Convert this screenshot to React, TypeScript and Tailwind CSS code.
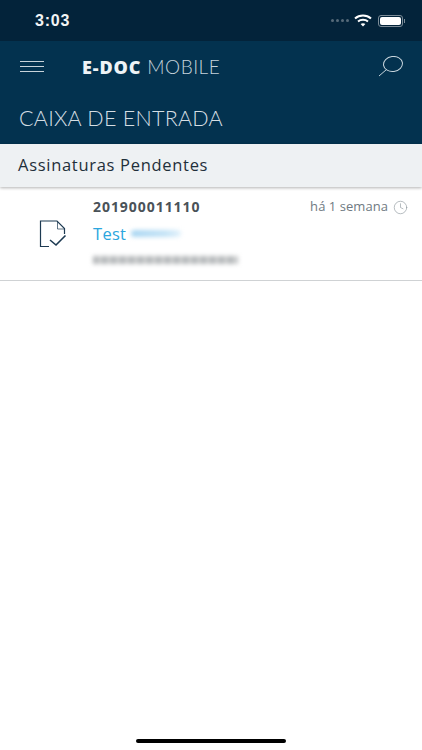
import { Clock } from 'lucide-react'

function Wifi() {
  return (
    <svg width="18" height="13" viewBox="0 0 18 13" fill="none" stroke="white" strokeWidth="2">
      <path d="M1 4.5C5.5 0.5 12.5 0.5 17 4.5" />
      <path d="M4 7.5C6.8 5.2 11.2 5.2 14 7.5" />
      <path d="M9 12.5L6.6 10C8 8.9 10 8.9 11.4 10Z" fill="white" stroke="none" />
    </svg>
  )
}

function DocCheck() {
  return (
    <svg width="28" height="29" viewBox="0 0 28 29" fill="none" stroke="#1d3a52">
      <path d="M10 26.5H1.5V1H18L25.5 8.5V14" strokeWidth="1.2" />
      <path d="M18.5 1.5V9H25.5" strokeWidth="0.7" />
      <path d="M11 20L17 25L26.5 15.5" strokeWidth="1.6" />
    </svg>
  )
}

export default function App() {
  return (
    <div className="relative h-[750px] w-[422px] overflow-hidden bg-white font-['Open_Sans',sans-serif]">
      {/* Status bar */}
      <div className="flex h-[41px] items-center justify-between bg-[#03233a] pl-[35px] pr-[17px]">
        <span className="font-['Liberation_Sans',sans-serif] text-[16px] font-bold tracking-[0.8px] text-[#f2f4f5]">3:03</span>
        <div className="flex items-center gap-[5px]">
          <div className="flex gap-[2px]">
            <span className="h-[3px] w-[3px] rounded-full bg-[#566a79]" />
            <span className="h-[3px] w-[3px] rounded-full bg-[#566a79]" />
            <span className="h-[3px] w-[3px] rounded-full bg-[#566a79]" />
            <span className="h-[3px] w-[3px] rounded-full bg-[#566a79]" />
          </div>
          <Wifi />
          <div className="ml-[1px] flex items-center gap-px">
            <div className="flex h-[12px] w-[25px] items-center rounded-[3px] border border-[#7c8c98] p-[1px]">
              <div className="h-full w-full rounded-[2px] bg-white" />
            </div>
            <span className="h-[4px] w-px bg-[#7c8c98]" />
          </div>
        </div>
      </div>

      {/* Header */}
      <div className="h-[103px] bg-[#03324f]">
        <div className="flex h-[51px] items-center justify-between pl-[20px] pr-[19px]">
          <div className="flex w-[62px] flex-col gap-[4px]">
            <span className="h-px w-[24px] bg-[#c8d3da]" />
            <span className="h-px w-[24px] bg-[#c8d3da]" />
            <span className="h-px w-[24px] bg-[#c8d3da]" />
          </div>
          <div className="flex flex-1 items-baseline gap-[6px] leading-none">
            <span className="font-['Open_Sans',sans-serif] text-[18px] font-extrabold tracking-[0.9px] text-[#eef3f6]">E-DOC</span>
            <span className="font-['Lato',sans-serif] text-[19px] font-light tracking-[0.5px] text-[#c6d3dc]">MOBILE</span>
          </div>
          <svg width="25" height="21" viewBox="0 0 25 21" fill="none" stroke="#c8d5dd" strokeWidth="1">
            <ellipse cx="15" cy="8" rx="9.5" ry="7.5" transform="rotate(-8 15 8)" />
            <path d="M8.5 13.5L1 20" />
          </svg>
        </div>
        <h1 className="pl-[19px] pt-[6px] font-['Lato',sans-serif] text-[21.5px] font-light leading-[40px] tracking-[0.25px] text-[#d5dee4]">
          CAIXA DE ENTRADA
        </h1>
      </div>

      {/* Section title */}
      <div className="relative flex h-[43px] items-center bg-[#eef1f3] pl-[18px] text-[16.5px] tracking-[0.7px] text-[#1f2f3a] shadow-[0_1px_3px_rgba(0,0,0,0.3)]">
        Assinaturas Pendentes
      </div>

      {/* Row */}
      <div className="flex h-[94px] border-b border-[#cfd2d4]">
        <div className="flex w-[93px] items-center justify-center pl-[13px] pt-[1px]">
          <DocCheck />
        </div>
        <div className="flex-1 pr-[14px]">
          <div className="flex items-center justify-between pt-[9px]">
            <span className="text-[14px] font-bold leading-[22px] tracking-[0.95px] text-[#4a5258]">201900011110</span>
            <div className="flex items-center gap-[5px] text-[13px] tracking-[0.05px] text-[#6f7a82]">
              há 1 semana
              <Clock size={15} strokeWidth={1} className="text-[#8b959c]" />
            </div>
          </div>
          <div className="mt-[4px] flex items-center gap-[5px] text-[16.5px] leading-[23px] tracking-[0.3px] text-[#2ba6de]">
            Test
            <div className="h-[7px] w-[50px] rounded-full bg-[linear-gradient(90deg,#a9d6f2,#c4e3f6_70%,#e3f2fb)] blur-[2px]" />
          </div>
          <div className="mt-[11px] h-[8px] w-[145px] bg-[repeating-linear-gradient(90deg,#b4b7b9_0px,#b4b7b9_5px,#cdcfd0_5px,#cdcfd0_9px)] blur-[2px]" />
        </div>
      </div>

      {/* Home indicator */}
      <div className="absolute bottom-[7px] left-[136px] h-[4px] w-[150px] rounded-full bg-black" />
    </div>
  )
}
